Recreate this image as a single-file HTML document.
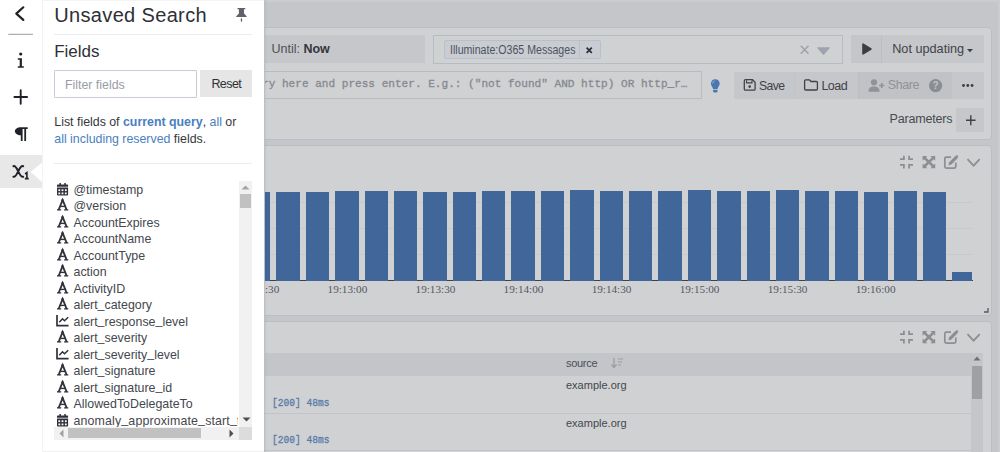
<!DOCTYPE html>
<html><head><meta charset="utf-8">
<style>
*{box-sizing:border-box;margin:0;padding:0}
html,body{width:1000px;height:452px;overflow:hidden}
body{position:relative;background:#c5c6c9;font-family:'Liberation Sans',sans-serif;color:#3a3d44}
.a{position:absolute}
.t{position:absolute;white-space:nowrap;line-height:1}
.bar{position:absolute;background:#41679a}
svg{position:absolute;overflow:visible}
.u{position:relative;top:-1.2px}
</style></head><body>

<div class="a" style="left:0px;top:0px;width:1000px;height:2px;background:#cbccce"></div>
<div class="a" style="left:998px;top:0px;width:2px;height:452px;background:#cbccce"></div>
<div class="a" style="left:200px;top:27px;width:792px;height:113px;background:#d0d1d3;border:1px solid #babec5;border-radius:4px"></div>
<div class="a" style="left:200px;top:35px;width:225px;height:28px;background:#c6c7ca"></div>
<div class="t" style="left:271.5px;top:42.62px;font-size:12.5px;color:#4c4f55;">Until: <b style="color:#33363c">Now</b></div>
<div class="a" style="left:433px;top:35px;width:410px;height:29px;border:1px solid #b8bbc3"></div>
<div class="a" style="left:444px;top:40px;width:157px;height:19px;border:1px solid #b9bfcb;background:#c9ccd3;border-radius:2px"></div>
<div class="a" style="left:579px;top:41px;width:1px;height:17px;background:#b9bfcb"></div>
<div class="t" style="left:449.7px;top:43.64px;font-size:12px;color:#4f525a;transform:scaleX(0.883);transform-origin:0 0;">Illuminate:O365 Messages</div>
<svg style="left:586.3px;top:46.5px" width="7" height="7"><path d="M0.6 0.6L5.8 5.8M5.8 0.6L0.6 5.8" stroke="#2b2e34" stroke-width="1.7"/></svg>
<svg style="left:799.5px;top:45px" width="10" height="10"><path d="M0.8 0.8L8.5 8.8M8.5 0.8L0.8 8.8" stroke="#9ea3ad" stroke-width="1.6"/></svg>
<svg style="left:816.5px;top:47px" width="14" height="9"><path d="M0.8 0.2H12.2C12.8 0.2 13 0.7 12.7 1.1L7.2 7.6C6.8 8 6.2 8 5.8 7.6L0.3 1.1C0 0.7 0.2 0.2 0.8 0.2Z" fill="#9ea3ad"/></svg>
<div class="a" style="left:851px;top:35px;width:30px;height:28px;background:#c5c6c9"></div>
<svg style="left:861px;top:43px" width="12" height="13"><path d="M1.2 1.2C1.2 0.4 1.9 0 2.5 0.4L10.3 5.2C10.9 5.6 10.9 6.4 10.3 6.8L2.5 11.6C1.9 12 1.2 11.6 1.2 10.8Z" fill="#3a3d44"/></svg>
<div class="a" style="left:881px;top:35px;width:103px;height:28px;background:#c6c7ca"></div>
<div class="t" style="left:892.2px;top:42.75px;font-size:12.7px;color:#404348;">Not updating</div>
<svg style="left:967.3px;top:48.6px" width="7" height="4"><path d="M0 0H6L3 3.3Z" fill="#3a3d44"/></svg>
<div class="a" style="left:200px;top:71px;width:502px;height:28px;border:1px solid #b8bbc3"></div>
<div class="t" style="left:262px;top:78.81px;font-size:11.08px;color:#86898f;font-family:'Liberation Mono',monospace;-webkit-text-stroke:0.3px #86898f;">ry here and press enter. E.g.: ("not found" AND http) OR http_r…</div>
<svg style="left:710px;top:79px" width="11" height="14"><path d="M5.3 0.2C2.7 0.2 0.9 2.2 0.9 4.6C0.9 6.8 2.6 7.9 3.1 10H7.5C8 7.9 9.7 6.8 9.7 4.6C9.7 2.2 7.9 0.2 5.3 0.2Z" fill="#4a76b3"/><path d="M2.6 4.6C2.6 3.2 3.5 2.1 4.8 1.9" fill="none" stroke="#a9bcd6" stroke-width="0.8"/><path d="M3.1 10.8H7.5V12.2C7.5 13 6.8 13.6 5.3 13.6C3.8 13.6 3.1 13 3.1 12.2Z" fill="#4a76b3"/></svg>
<div class="a" style="left:734px;top:72px;width:61px;height:27px;background:#c6c7ca"></div>
<div class="a" style="left:795px;top:72px;width:63px;height:27px;background:#c6c7ca"></div>
<div class="a" style="left:858px;top:72px;width:94px;height:27px;background:#c1c2c6"></div>
<div class="a" style="left:952px;top:72px;width:32px;height:27px;background:#c6c7ca"></div>
<div class="a" style="left:794px;top:72px;width:1px;height:27px;background:#c2c3c6"></div>
<div class="a" style="left:857.5px;top:72px;width:1px;height:27px;background:#bdbec2"></div>
<div class="a" style="left:881px;top:35px;width:1px;height:28px;background:#bdbec2"></div>
<svg style="left:0;top:0" width="1000" height="100"><path d="M745.5 79.7H752.5L755.1 82.3V88.9C755.1 89.7 754.6 90.1 753.8 90.1H745.5C744.7 90.1 744.3 89.7 744.3 88.9V80.9C744.3 80.1 744.7 79.7 745.5 79.7Z" fill="none" stroke="#3f4247" stroke-width="1.3"/><path d="M746.6 80.2V82.9H752V80.2" fill="none" stroke="#3f4247" stroke-width="1.1"/><circle cx="749.7" cy="86.6" r="1.3" fill="#3f4247"/><path d="M805.6 79.8H809.3L810.9 81.5H816.3C817 81.5 817.4 81.9 817.4 82.6V88.9C817.4 89.6 817 90 816.3 90H805.7C805 90 804.6 89.6 804.6 88.9V80.9C804.6 80.2 805 79.8 805.6 79.8Z" fill="none" stroke="#3f4247" stroke-width="1.3" stroke-linejoin="round"/></svg>
<div class="t" style="left:758.9px;top:79.87px;font-size:12.2px;color:#3f4247;letter-spacing:-0.55px;">Save</div>
<div class="t" style="left:821.4px;top:79.52px;font-size:12.5px;color:#3f4247;letter-spacing:-0.5px;">Load</div>
<svg style="left:868px;top:79px" width="17" height="13"><circle cx="6" cy="3.3" r="3.1" fill="#8f9297"/><path d="M0.5 12.8C0.5 9 2.2 7.6 6 7.6C9.8 7.6 11.5 9 11.5 12.8Z" fill="#8f9297"/><path d="M13.7 4V9M11.2 6.5H16.2" stroke="#8f9297" stroke-width="1.5"/></svg>
<div class="t" style="left:887.8px;top:79.42px;font-size:12.5px;color:#8f9297;letter-spacing:-0.44px;">Share</div>
<svg style="left:929px;top:79px" width="14" height="14"><circle cx="6.6" cy="6.6" r="6.6" fill="#8a8d92"/><text x="6.6" y="10.4" font-size="10" font-weight="bold" text-anchor="middle" fill="#c3c4c7" font-family="Liberation Sans">?</text></svg>
<svg style="left:962px;top:84px" width="12" height="3"><circle cx="1.5" cy="1.5" r="1.4" fill="#3a3d44"/><circle cx="5.8" cy="1.5" r="1.4" fill="#3a3d44"/><circle cx="10.1" cy="1.5" r="1.4" fill="#3a3d44"/></svg>
<div class="t" style="left:889.6px;top:112.92px;font-size:12.5px;color:#474a50;letter-spacing:-0.2px;">Parameters</div>
<div class="a" style="left:956px;top:108px;width:28px;height:24px;background:#c6c7ca"></div>
<svg style="left:965.5px;top:114.5px" width="10" height="11"><path d="M4.8 0.3V10.3M0 5.3H9.6" stroke="#3f4247" stroke-width="1.4"/></svg>
<div class="a" style="left:200px;top:145px;width:792px;height:171px;background:#d0d1d3;border:1px solid #babec5;border-radius:4px"></div>
<div class="a" style="left:264px;top:202px;width:708px;height:1px;background:#c8c9cc"></div>
<div class="a" style="left:264px;top:228px;width:708px;height:1px;background:#c8c9cc"></div>
<div class="a" style="left:264px;top:254px;width:708px;height:1px;background:#c8c9cc"></div>
<div class="a" style="left:240px;top:280px;width:733px;height:1px;background:#3d4046"></div>
<div class="bar" style="left:246.96px;top:192px;width:23.4px;height:89.00px"></div>
<div class="bar" style="left:276.35px;top:192px;width:23.4px;height:89.00px"></div>
<div class="bar" style="left:305.74px;top:192.4px;width:23.4px;height:88.60px"></div>
<div class="bar" style="left:335.13px;top:190.9px;width:23.4px;height:90.10px"></div>
<div class="bar" style="left:364.52px;top:191px;width:23.4px;height:90.00px"></div>
<div class="bar" style="left:393.91px;top:191px;width:23.4px;height:90.00px"></div>
<div class="bar" style="left:423.30px;top:192.4px;width:23.4px;height:88.60px"></div>
<div class="bar" style="left:452.69px;top:191.8px;width:23.4px;height:89.20px"></div>
<div class="bar" style="left:482.08px;top:190.6px;width:23.4px;height:90.40px"></div>
<div class="bar" style="left:511.47px;top:190.6px;width:23.4px;height:90.40px"></div>
<div class="bar" style="left:540.86px;top:190.9px;width:23.4px;height:90.10px"></div>
<div class="bar" style="left:570.25px;top:190.4px;width:23.4px;height:90.60px"></div>
<div class="bar" style="left:599.64px;top:191.2px;width:23.4px;height:89.80px"></div>
<div class="bar" style="left:629.03px;top:191.2px;width:23.4px;height:89.80px"></div>
<div class="bar" style="left:658.42px;top:190.6px;width:23.4px;height:90.40px"></div>
<div class="bar" style="left:687.81px;top:189.8px;width:23.4px;height:91.20px"></div>
<div class="bar" style="left:717.20px;top:190.6px;width:23.4px;height:90.40px"></div>
<div class="bar" style="left:746.59px;top:190.6px;width:23.4px;height:90.40px"></div>
<div class="bar" style="left:775.98px;top:190.4px;width:23.4px;height:90.60px"></div>
<div class="bar" style="left:805.37px;top:191.2px;width:23.4px;height:89.80px"></div>
<div class="bar" style="left:834.76px;top:191.2px;width:23.4px;height:89.80px"></div>
<div class="bar" style="left:864.15px;top:191.8px;width:23.4px;height:89.20px"></div>
<div class="bar" style="left:893.54px;top:190.6px;width:23.4px;height:90.40px"></div>
<div class="bar" style="left:922.93px;top:191.8px;width:23.4px;height:89.20px"></div>
<div class="bar" style="left:952.32px;top:271.5px;width:20px;height:9.5px"></div>
<div class="t" style="left:229.40px;top:284.14px;width:60px;text-align:center;font-family:'Liberation Serif',serif;font-size:11.2px;color:#55585e">19:12:30</div>
<div class="t" style="left:317.43px;top:284.14px;width:60px;text-align:center;font-family:'Liberation Serif',serif;font-size:11.2px;color:#55585e">19:13:00</div>
<div class="t" style="left:405.46px;top:284.14px;width:60px;text-align:center;font-family:'Liberation Serif',serif;font-size:11.2px;color:#55585e">19:13:30</div>
<div class="t" style="left:493.49px;top:284.14px;width:60px;text-align:center;font-family:'Liberation Serif',serif;font-size:11.2px;color:#55585e">19:14:00</div>
<div class="t" style="left:581.52px;top:284.14px;width:60px;text-align:center;font-family:'Liberation Serif',serif;font-size:11.2px;color:#55585e">19:14:30</div>
<div class="t" style="left:669.55px;top:284.14px;width:60px;text-align:center;font-family:'Liberation Serif',serif;font-size:11.2px;color:#55585e">19:15:00</div>
<div class="t" style="left:757.58px;top:284.14px;width:60px;text-align:center;font-family:'Liberation Serif',serif;font-size:11.2px;color:#55585e">19:15:30</div>
<div class="t" style="left:845.61px;top:284.14px;width:60px;text-align:center;font-family:'Liberation Serif',serif;font-size:11.2px;color:#55585e">19:16:00</div>
<svg style="left:0;top:0px" width="1000" height="452"><g fill="none" stroke="#8b8e93" stroke-width="1.8"><path d="M900 159.2H903.9V155.8M909.1 155.8V159.2H913M900 164.9H903.9V168.4M909.1 168.4V164.9H913"/></g><path d="M922.6 156H927.4L922.6 160.8Z M935.2 156H930.4L935.2 160.8Z M922.6 168.2H927.4L922.6 163.4Z M935.2 168.2H930.4L935.2 163.4Z" fill="#8b8e93"/><path d="M924 157.4L933.8 166.8M933.8 157.4L924 166.8" stroke="#8b8e93" stroke-width="2.6"/><path d="M951 157.2H946.4C945.4 157.2 944.8 157.8 944.8 158.8V166.6C944.8 167.6 945.4 168.2 946.4 168.2H954.2C955.2 168.2 955.8 167.6 955.8 166.6V162.4" fill="none" stroke="#8b8e93" stroke-width="1.7"/><path d="M948.4 165.4L949.2 162.2L955.6 155.8L957.8 158L951.4 164.4Z" fill="#8b8e93"/><circle cx="956.9" cy="156.6" r="1.3" fill="#8b8e93"/><path d="M967.5 159.2L973.6 165.6L979.7 159.2" fill="none" stroke="#8b8e93" stroke-width="1.8"/></svg>
<svg style="left:984px;top:308px" width="5" height="5"><path d="M4 0V4H0" fill="none" stroke="#55585e" stroke-width="1.3"/></svg>
<div class="a" style="left:200px;top:321px;width:792px;height:140px;background:#d0d1d3;border:1px solid #babec5;border-radius:4px"></div>
<svg style="left:0;top:175.39999999999998px" width="1000" height="452"><g fill="none" stroke="#8b8e93" stroke-width="1.8"><path d="M900 159.2H903.9V155.8M909.1 155.8V159.2H913M900 164.9H903.9V168.4M909.1 168.4V164.9H913"/></g><path d="M922.6 156H927.4L922.6 160.8Z M935.2 156H930.4L935.2 160.8Z M922.6 168.2H927.4L922.6 163.4Z M935.2 168.2H930.4L935.2 163.4Z" fill="#8b8e93"/><path d="M924 157.4L933.8 166.8M933.8 157.4L924 166.8" stroke="#8b8e93" stroke-width="2.6"/><path d="M951 157.2H946.4C945.4 157.2 944.8 157.8 944.8 158.8V166.6C944.8 167.6 945.4 168.2 946.4 168.2H954.2C955.2 168.2 955.8 167.6 955.8 166.6V162.4" fill="none" stroke="#8b8e93" stroke-width="1.7"/><path d="M948.4 165.4L949.2 162.2L955.6 155.8L957.8 158L951.4 164.4Z" fill="#8b8e93"/><circle cx="956.9" cy="156.6" r="1.3" fill="#8b8e93"/><path d="M967.5 159.2L973.6 165.6L979.7 159.2" fill="none" stroke="#8b8e93" stroke-width="1.8"/></svg>
<div class="a" style="left:200px;top:353px;width:771px;height:23px;background:#c4c5c8"></div>
<div class="a" style="left:200px;top:413px;width:771px;height:1px;background:#c3c4c7"></div>
<div class="a" style="left:200px;top:450px;width:771px;height:1px;background:#c3c4c7"></div>
<div class="t" style="left:566px;top:358.39px;font-size:11px;color:#4a4d54;letter-spacing:-0.3px;">source</div>
<svg style="left:611px;top:358px" width="12" height="11"><path d="M3 0V9M0.5 6.5L3 9.5L5.5 6.5" fill="none" stroke="#9a9da2" stroke-width="1.3"/><path d="M7 1H12M7 4H11M7 7H10" stroke="#9a9da2" stroke-width="1.2"/></svg>
<div class="t" style="left:566px;top:380.19px;font-size:11px;color:#44474d;">example.org</div>
<div class="t" style="left:566px;top:418.19px;font-size:11px;color:#44474d;">example.org</div>
<div class="t" style="left:271.6px;top:397.97px;font-size:11px;color:#587ba8;font-family:'Liberation Mono',monospace;transform:scaleX(0.871);transform-origin:0 0;-webkit-text-stroke:0.3px #587ba8;">[200] 48ms</div>
<div class="t" style="left:271.6px;top:435.07px;font-size:11px;color:#587ba8;font-family:'Liberation Mono',monospace;transform:scaleX(0.871);transform-origin:0 0;-webkit-text-stroke:0.3px #587ba8;">[200] 48ms</div>
<div class="a" style="left:971px;top:353px;width:12px;height:99px;background:#c5c6c9"></div>
<div class="a" style="left:972px;top:366px;width:10px;height:33px;background:#9fa0a3"></div>
<svg style="left:973px;top:356px" width="8" height="5"><path d="M0.5 4.5H7.5L4 0.5Z" fill="#6e7176"/></svg>
<div class="a" style="left:264px;top:0px;width:1px;height:452px;background:#bbc0c8"></div>
<div class="a" style="left:265px;top:0px;width:3px;height:452px;background:linear-gradient(to right,rgba(0,0,0,0.04),rgba(0,0,0,0))"></div>
<div class="a" style="left:0px;top:0px;width:42px;height:452px;background:#fff"></div>
<div class="a" style="left:42px;top:0px;width:1px;height:452px;background:#f3f3f3"></div>
<svg style="left:0;top:0" width="42" height="40"><path d="M23.3 7.3L16.3 13.6L23.3 19.9" fill="none" stroke="#1f2228" stroke-width="2.2" stroke-linecap="round" stroke-linejoin="round"/><path d="M8.3 34.3H33" stroke="#9c9c9c" stroke-width="1"/></svg>
<svg style="left:0;top:40px" width="42" height="40"><circle cx="20.7" cy="14" r="1.6" fill="#1f2228"/><path d="M17.8 18.3H21.9V26.3H23.8V27.7H17.8V26.3H19.7V19.7H17.8Z" fill="#1f2228"/></svg>
<svg style="left:0;top:80px" width="42" height="40"><path d="M14.4 17H27.1M20.7 10.2V23.8" stroke="#1f2228" stroke-width="1.9" stroke-linecap="round"/></svg>
<svg style="left:0;top:120px" width="42" height="30"><path d="M27.7 7.2V9H26.1V21H24.3V9H22.6V21H20.8V15.3C17.4 15.3 14.9 13.3 14.9 11.2C14.9 9 17.4 7.2 20.8 7.2Z" fill="#1f2228"/></svg>
<svg style="left:0;top:155px" width="42" height="33"><path d="M0 0H42V7.6L30.5 17L42 26.9V33H0Z" fill="#e8e8e8"/></svg>
<svg style="left:0;top:0" width="42" height="190"><path d="M13.4 166.2Q15.4 165.4 18.2 171.4Q21 177.4 23.2 176.8M23.2 166.2Q21 165.4 18.2 171.4Q15.4 177.4 13.4 176.8" fill="none" stroke="#1f2228" stroke-width="2" stroke-linecap="round"/><path d="M25.1 174L26.9 172.6V178.6M24.9 178.6H28.7" fill="none" stroke="#1f2228" stroke-width="1.6"/></svg>
<div class="a" style="left:43px;top:0px;width:221px;height:452px;background:#fff"></div>
<div class="a" style="left:43px;top:0px;width:221px;height:1px;background:#f4f4f4"></div>
<div class="a" style="left:43px;top:451px;width:221px;height:1px;background:#f0f0f0"></div>
<div class="t" style="left:54.2px;top:4.77px;font-size:20px;color:#2d3036;letter-spacing:0.35px;">Unsaved Search</div>
<svg style="left:0;top:0" width="270" height="30"><path d="M237.8 8H245C245.5 8 245.7 9.3 245 9.3H244V13.4L246.6 16.2C246.9 16.6 246.7 17 246.3 17H236.6C236.2 17 236 16.6 236.3 16.2L238.9 13.4V9.3H237.8C237.1 9.3 237.3 8 237.8 8Z" fill="#5f6268"/><rect x="240.8" y="18.2" width="1.3" height="3.5" rx="0.6" fill="#5f6268"/></svg>
<div class="a" style="left:54px;top:34px;width:198px;height:1px;background:#ececec"></div>
<div class="t" style="left:54.2px;top:43.41px;font-size:17px;color:#2d3036;">Fields</div>
<div class="a" style="left:54px;top:70px;width:143px;height:28px;border:1px solid #c6ccd7;border-radius:1px"></div>
<div class="t" style="left:64.9px;top:78.50px;font-size:12.4px;color:#999da5;">Filter fields</div>
<div class="a" style="left:200px;top:70px;width:52px;height:27px;background:#e6e6e6"></div>
<div class="t" style="left:211.4px;top:78.02px;font-size:12.5px;color:#2d3036;letter-spacing:-0.55px;">Reset</div>
<div class="t" style="left:54.3px;top:116.33px;font-size:12.37px;color:#34373c;">List fields of <b style="color:#4a7fc1">current query</b>, <span style="color:#4a7fc1">all</span> or</div>
<div class="t" style="left:54.3px;top:132.93px;font-size:12.37px;color:#34373c;"><span style="color:#4a7fc1">all including reserved</span> fields.</div>
<div class="a" style="left:54px;top:163px;width:198px;height:1px;background:#ececec"></div>
<div class="a" style="left:54px;top:180px;width:184px;height:247px;overflow:hidden">
<svg style="left:2.9px;top:2.60px" width="12" height="13"><rect x="0" y="1.5" width="11.1" height="2.3" rx="0.6" fill="#2f3238"/><rect x="2.4" y="0" width="1.5" height="2.5" fill="#2f3238"/><rect x="7.3" y="0" width="1.5" height="2.5" fill="#2f3238"/><path d="M0 4.6H11.1V11.6C11.1 12.2 10.7 12.6 10.1 12.6H1C0.4 12.6 0 12.2 0 11.6Z" fill="#2f3238"/><g fill="#fff"><rect x="1.4" y="6.3" width="1.8" height="1.8"/><rect x="4.6" y="6.3" width="1.8" height="1.8"/><rect x="7.9" y="6.3" width="1.8" height="1.8"/><rect x="1.4" y="9.5" width="1.8" height="1.8"/><rect x="4.6" y="9.5" width="1.8" height="1.8"/><rect x="7.9" y="9.5" width="1.8" height="1.8"/></g></svg>
<div class="t" style="left:19.5px;top:3.60px;font-size:12.4px;color:#44474d;">@timestamp</div>
<svg style="left:2.8px;top:19.40px" width="12" height="12"><path d="M1.6 11L5.65 1L9.7 11" fill="none" stroke="#2f3238" stroke-width="1.9"/><path d="M3.4 7.4H7.9" stroke="#2f3238" stroke-width="1.4"/><path d="M0 10.95H4.2M7.1 10.95H11.3M4.1 1.2H6.6" stroke="#2f3238" stroke-width="1.3"/></svg>
<div class="t" style="left:19.5px;top:20.10px;font-size:12.4px;color:#44474d;">@version</div>
<svg style="left:2.8px;top:35.90px" width="12" height="12"><path d="M1.6 11L5.65 1L9.7 11" fill="none" stroke="#2f3238" stroke-width="1.9"/><path d="M3.4 7.4H7.9" stroke="#2f3238" stroke-width="1.4"/><path d="M0 10.95H4.2M7.1 10.95H11.3M4.1 1.2H6.6" stroke="#2f3238" stroke-width="1.3"/></svg>
<div class="t" style="left:19.5px;top:36.60px;font-size:12.4px;color:#44474d;">AccountExpires</div>
<svg style="left:2.8px;top:52.40px" width="12" height="12"><path d="M1.6 11L5.65 1L9.7 11" fill="none" stroke="#2f3238" stroke-width="1.9"/><path d="M3.4 7.4H7.9" stroke="#2f3238" stroke-width="1.4"/><path d="M0 10.95H4.2M7.1 10.95H11.3M4.1 1.2H6.6" stroke="#2f3238" stroke-width="1.3"/></svg>
<div class="t" style="left:19.5px;top:53.10px;font-size:12.4px;color:#44474d;">AccountName</div>
<svg style="left:2.8px;top:68.90px" width="12" height="12"><path d="M1.6 11L5.65 1L9.7 11" fill="none" stroke="#2f3238" stroke-width="1.9"/><path d="M3.4 7.4H7.9" stroke="#2f3238" stroke-width="1.4"/><path d="M0 10.95H4.2M7.1 10.95H11.3M4.1 1.2H6.6" stroke="#2f3238" stroke-width="1.3"/></svg>
<div class="t" style="left:19.5px;top:69.60px;font-size:12.4px;color:#44474d;">AccountType</div>
<svg style="left:2.8px;top:85.40px" width="12" height="12"><path d="M1.6 11L5.65 1L9.7 11" fill="none" stroke="#2f3238" stroke-width="1.9"/><path d="M3.4 7.4H7.9" stroke="#2f3238" stroke-width="1.4"/><path d="M0 10.95H4.2M7.1 10.95H11.3M4.1 1.2H6.6" stroke="#2f3238" stroke-width="1.3"/></svg>
<div class="t" style="left:19.5px;top:86.10px;font-size:12.4px;color:#44474d;">action</div>
<svg style="left:2.8px;top:101.90px" width="12" height="12"><path d="M1.6 11L5.65 1L9.7 11" fill="none" stroke="#2f3238" stroke-width="1.9"/><path d="M3.4 7.4H7.9" stroke="#2f3238" stroke-width="1.4"/><path d="M0 10.95H4.2M7.1 10.95H11.3M4.1 1.2H6.6" stroke="#2f3238" stroke-width="1.3"/></svg>
<div class="t" style="left:19.5px;top:102.60px;font-size:12.4px;color:#44474d;">ActivityID</div>
<svg style="left:2.8px;top:118.40px" width="12" height="12"><path d="M1.6 11L5.65 1L9.7 11" fill="none" stroke="#2f3238" stroke-width="1.9"/><path d="M3.4 7.4H7.9" stroke="#2f3238" stroke-width="1.4"/><path d="M0 10.95H4.2M7.1 10.95H11.3M4.1 1.2H6.6" stroke="#2f3238" stroke-width="1.3"/></svg>
<div class="t" style="left:19.5px;top:119.10px;font-size:12.4px;color:#44474d;">alert<span class="u">_</span>category</div>
<svg style="left:2.1px;top:135.30px" width="13" height="12"><path d="M1 0V10.7H12.6" fill="none" stroke="#2f3238" stroke-width="1.7"/><path d="M3.3 7.3L6.5 3.8L8.5 5.8L12.2 2.2" fill="none" stroke="#2f3238" stroke-width="1.5"/></svg>
<div class="t" style="left:19.5px;top:135.60px;font-size:12.4px;color:#44474d;">alert<span class="u">_</span>response<span class="u">_</span>level</div>
<svg style="left:2.8px;top:151.40px" width="12" height="12"><path d="M1.6 11L5.65 1L9.7 11" fill="none" stroke="#2f3238" stroke-width="1.9"/><path d="M3.4 7.4H7.9" stroke="#2f3238" stroke-width="1.4"/><path d="M0 10.95H4.2M7.1 10.95H11.3M4.1 1.2H6.6" stroke="#2f3238" stroke-width="1.3"/></svg>
<div class="t" style="left:19.5px;top:152.10px;font-size:12.4px;color:#44474d;">alert<span class="u">_</span>severity</div>
<svg style="left:2.1px;top:168.30px" width="13" height="12"><path d="M1 0V10.7H12.6" fill="none" stroke="#2f3238" stroke-width="1.7"/><path d="M3.3 7.3L6.5 3.8L8.5 5.8L12.2 2.2" fill="none" stroke="#2f3238" stroke-width="1.5"/></svg>
<div class="t" style="left:19.5px;top:168.60px;font-size:12.4px;color:#44474d;">alert<span class="u">_</span>severity<span class="u">_</span>level</div>
<svg style="left:2.8px;top:184.40px" width="12" height="12"><path d="M1.6 11L5.65 1L9.7 11" fill="none" stroke="#2f3238" stroke-width="1.9"/><path d="M3.4 7.4H7.9" stroke="#2f3238" stroke-width="1.4"/><path d="M0 10.95H4.2M7.1 10.95H11.3M4.1 1.2H6.6" stroke="#2f3238" stroke-width="1.3"/></svg>
<div class="t" style="left:19.5px;top:185.10px;font-size:12.4px;color:#44474d;">alert<span class="u">_</span>signature</div>
<svg style="left:2.8px;top:200.90px" width="12" height="12"><path d="M1.6 11L5.65 1L9.7 11" fill="none" stroke="#2f3238" stroke-width="1.9"/><path d="M3.4 7.4H7.9" stroke="#2f3238" stroke-width="1.4"/><path d="M0 10.95H4.2M7.1 10.95H11.3M4.1 1.2H6.6" stroke="#2f3238" stroke-width="1.3"/></svg>
<div class="t" style="left:19.5px;top:201.60px;font-size:12.4px;color:#44474d;">alert<span class="u">_</span>signature<span class="u">_</span>id</div>
<svg style="left:2.8px;top:217.40px" width="12" height="12"><path d="M1.6 11L5.65 1L9.7 11" fill="none" stroke="#2f3238" stroke-width="1.9"/><path d="M3.4 7.4H7.9" stroke="#2f3238" stroke-width="1.4"/><path d="M0 10.95H4.2M7.1 10.95H11.3M4.1 1.2H6.6" stroke="#2f3238" stroke-width="1.3"/></svg>
<div class="t" style="left:19.5px;top:218.10px;font-size:12.4px;color:#44474d;">AllowedToDelegateTo</div>
<svg style="left:2.9px;top:233.60px" width="12" height="13"><rect x="0" y="1.5" width="11.1" height="2.3" rx="0.6" fill="#2f3238"/><rect x="2.4" y="0" width="1.5" height="2.5" fill="#2f3238"/><rect x="7.3" y="0" width="1.5" height="2.5" fill="#2f3238"/><path d="M0 4.6H11.1V11.6C11.1 12.2 10.7 12.6 10.1 12.6H1C0.4 12.6 0 12.2 0 11.6Z" fill="#2f3238"/><g fill="#fff"><rect x="1.4" y="6.3" width="1.8" height="1.8"/><rect x="4.6" y="6.3" width="1.8" height="1.8"/><rect x="7.9" y="6.3" width="1.8" height="1.8"/><rect x="1.4" y="9.5" width="1.8" height="1.8"/><rect x="4.6" y="9.5" width="1.8" height="1.8"/><rect x="7.9" y="9.5" width="1.8" height="1.8"/></g></svg>
<div class="t" style="left:19.5px;top:234.60px;font-size:12.4px;color:#44474d;letter-spacing:0.14px;">anomaly<span class="u">_</span>approximate<span class="u">_</span>start<span class="u">_</span>time</div>
</div>
<div class="a" style="left:238.5px;top:180.5px;width:13.5px;height:247px;background:#f1f1f1"></div>
<div class="a" style="left:239.7px;top:194.4px;width:11.3px;height:13.6px;background:#c1c1c1"></div>
<svg style="left:241px;top:185px" width="9" height="5"><path d="M0.5 4.5H8.5L4.5 0.5Z" fill="#a3a3a3"/></svg>
<svg style="left:241.5px;top:417px" width="9" height="5"><path d="M0.5 0.5H8.5L4.5 4.5Z" fill="#505050"/></svg>
<div class="a" style="left:54px;top:427px;width:184.5px;height:12.7px;background:#f1f1f1"></div>
<div class="a" style="left:68px;top:428px;width:133px;height:10.4px;background:#c1c1c1"></div>
<div class="a" style="left:238.5px;top:427px;width:13.5px;height:12.7px;background:#dcdcdc"></div>
<svg style="left:59px;top:429px" width="5" height="9"><path d="M4.5 0.5V8.5L0.5 4.5Z" fill="#a3a3a3"/></svg>
<svg style="left:229px;top:429px" width="5" height="9"><path d="M0.5 0.5V8.5L4.5 4.5Z" fill="#505050"/></svg>
</body></html>
